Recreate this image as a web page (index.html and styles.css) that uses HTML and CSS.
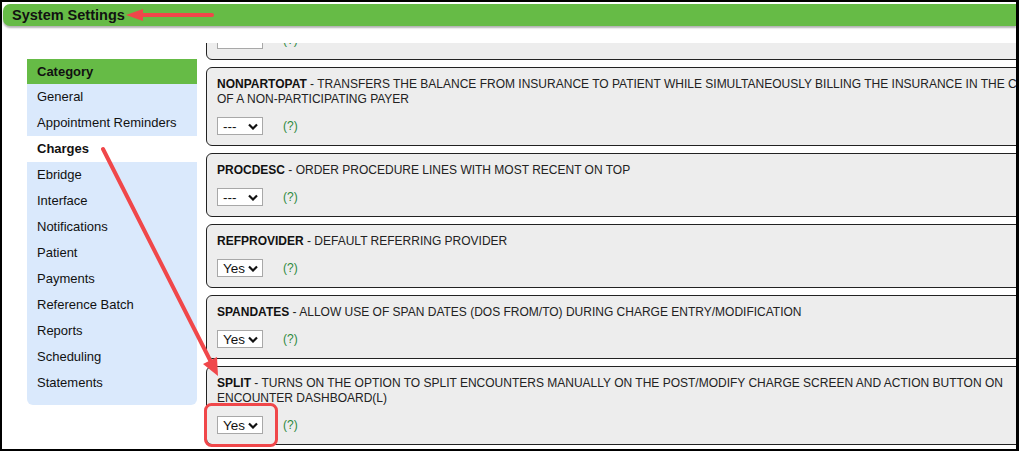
FILE: index.html
```html
<!DOCTYPE html>
<html lang="en">
<head>
  <meta charset="UTF-8" />
  <title>System Settings</title>
  <link rel="stylesheet" href="styles.css">
</head>
<body>
  <div class="frame">
    <div class="page-header">System Settings</div>

    <div class="main">
      <div class="category-box">
        <div class="category-title">Category</div>
        <div class="category-item">General</div>
        <div class="category-item">Appointment Reminders</div>
        <div class="category-item active">Charges</div>
        <div class="category-item">Ebridge</div>
        <div class="category-item">Interface</div>
        <div class="category-item">Notifications</div>
        <div class="category-item">Patient</div>
        <div class="category-item">Payments</div>
        <div class="category-item">Reference Batch</div>
        <div class="category-item">Reports</div>
        <div class="category-item">Scheduling</div>
        <div class="category-item">Statements</div>
      </div>

      <div class="settings-pane">
        <div class="settings-list">
          <div class="setting">
            <div class="desc"><b>MODBILLING</b> - ALLOW MODIFIERS TO BE BILLED ON THE CLAIM</div>
            <div class="controls">
              <span class="select"><span></span></span>
              <span class="help">(?)</span>
            </div>
          </div>

          <div class="setting">
            <div class="desc"><b>NONPARTOPAT</b> - TRANSFERS THE BALANCE FROM INSURANCE TO PATIENT WHILE SIMULTANEOUSLY BILLING THE INSURANCE IN THE CASE OF A NON-PARTICIPATING PAYER</div>
            <div class="controls">
              <span class="select"><span>---</span><svg width="10" height="7" viewBox="0 0 10 7"><polyline points="1,1.5 5,5.5 9,1.5" /></svg></span>
              <span class="help">(?)</span>
            </div>
          </div>

          <div class="setting">
            <div class="desc"><b>PROCDESC</b> - ORDER PROCEDURE LINES WITH MOST RECENT ON TOP</div>
            <div class="controls">
              <span class="select"><span>---</span><svg width="10" height="7" viewBox="0 0 10 7"><polyline points="1,1.5 5,5.5 9,1.5" /></svg></span>
              <span class="help">(?)</span>
            </div>
          </div>

          <div class="setting">
            <div class="desc"><b>REFPROVIDER</b> - DEFAULT REFERRING PROVIDER</div>
            <div class="controls">
              <span class="select"><span>Yes</span><svg width="10" height="7" viewBox="0 0 10 7"><polyline points="1,1.5 5,5.5 9,1.5" /></svg></span>
              <span class="help">(?)</span>
            </div>
          </div>

          <div class="setting">
            <div class="desc"><b>SPANDATES</b> - ALLOW USE OF SPAN DATES (DOS FROM/TO) DURING CHARGE ENTRY/MODIFICATION</div>
            <div class="controls">
              <span class="select"><span>Yes</span><svg width="10" height="7" viewBox="0 0 10 7"><polyline points="1,1.5 5,5.5 9,1.5" /></svg></span>
              <span class="help">(?)</span>
            </div>
          </div>

          <div class="setting">
            <div class="desc"><b>SPLIT</b> - TURNS ON THE OPTION TO SPLIT ENCOUNTERS MANUALLY ON THE POST/MODIFY CHARGE SCREEN AND ACTION BUTTON ON ENCOUNTER DASHBOARD(L)</div>
            <div class="controls">
              <span class="select"><span>Yes</span><svg width="10" height="7" viewBox="0 0 10 7"><polyline points="1,1.5 5,5.5 9,1.5" /></svg></span>
              <span class="help">(?)</span>
            </div>
          </div>
        </div>
      </div>
    </div>

    <!-- annotation marks drawn over the screenshot -->
    <svg class="annotations" width="1019" height="451" viewBox="0 0 1019 451">
      <line x1="212" y1="15" x2="138" y2="15" class="mark" />
      <polygon points="126,15 143,9 143,21" class="mark-head" />
      <line x1="103" y1="149" x2="211" y2="362" class="mark" />
      <polygon points="218,376 203,364 217,357" class="mark-head" />
      <rect x="205.5" y="404.5" width="71" height="41" rx="6" class="mark-box" />
    </svg>
  </div>
</body>
</html>
```

FILE: styles.css
```css
body {
  margin: 0;
  font-family: 'Liberation Sans', Arial, sans-serif;
  color: #222;
  background: #fff;
}
.frame {
  position: relative;
  width: 1019px;
  height: 451px;
  box-sizing: border-box;
  border: 2px solid #000;
  border-right-width: 3px;
  overflow: hidden;
  background: #fff;
}
.page-header {
  margin: 2px 0 0 1px;
  height: 22px;
  line-height: 22px;
  padding-left: 9px;
  background: #66bb46;
  border-radius: 7px 0 0 7px;
  box-shadow: 0 2px 2px rgba(0, 0, 0, 0.3);
  font-size: 14.5px;
  font-weight: bold;
  color: #111;
}
.main {
  display: flex;
  align-items: flex-start;
  margin-top: 17px;
  height: 404px;
}
.category-box {
  flex: none;
  width: 170px;
  margin: 16px 0 0 25px;
  padding-bottom: 9px;
  background: #dae9fc;
  border-radius: 0 0 6px 6px;
  font-size: 13px;
  color: #111;
}
.category-title {
  height: 25px;
  line-height: 25px;
  padding-left: 10px;
  background: #66bb46;
  font-weight: bold;
}
.category-item {
  height: 26px;
  line-height: 26px;
  padding-left: 10px;
}
.category-item.active {
  background: #fff;
  font-weight: bold;
}
.settings-pane {
  flex: none;
  width: 865px;
  height: 404px;
  margin-left: 9px;
  overflow: hidden;
}
.settings-list {
  display: flex;
  flex-direction: column;
  gap: 7px;
  margin-top: -47px;
}
.setting {
  background: #ededed;
  border: 1px solid #222;
  border-radius: 6px;
  padding: 9px 10px 10px;
}
.desc {
  font-size: 12px;
  line-height: 15px;
}
.desc b {
  color: #111;
}
.controls {
  display: flex;
  align-items: center;
  margin-top: 10px;
  height: 18px;
}
.select {
  display: inline-flex;
  align-items: center;
  justify-content: space-between;
  box-sizing: border-box;
  width: 46px;
  height: 18px;
  padding: 0 4px 0 5px;
  border: 1px solid #a8a8a8;
  background: #fff;
  font-size: 13.5px;
  color: #111;
}
.select svg polyline {
  fill: none;
  stroke: #111;
  stroke-width: 2.2;
}
.help {
  margin-left: 20px;
  font-size: 12px;
  color: #2e8a3e;
}
.annotations {
  position: absolute;
  left: -2px;
  top: -2px;
  pointer-events: none;
}
.mark {
  stroke: #f0474a;
  stroke-width: 4;
  stroke-linecap: round;
}
.mark-head {
  fill: #f0474a;
}
.mark-box {
  fill: none;
  stroke: #f0474a;
  stroke-width: 3;
}
```
